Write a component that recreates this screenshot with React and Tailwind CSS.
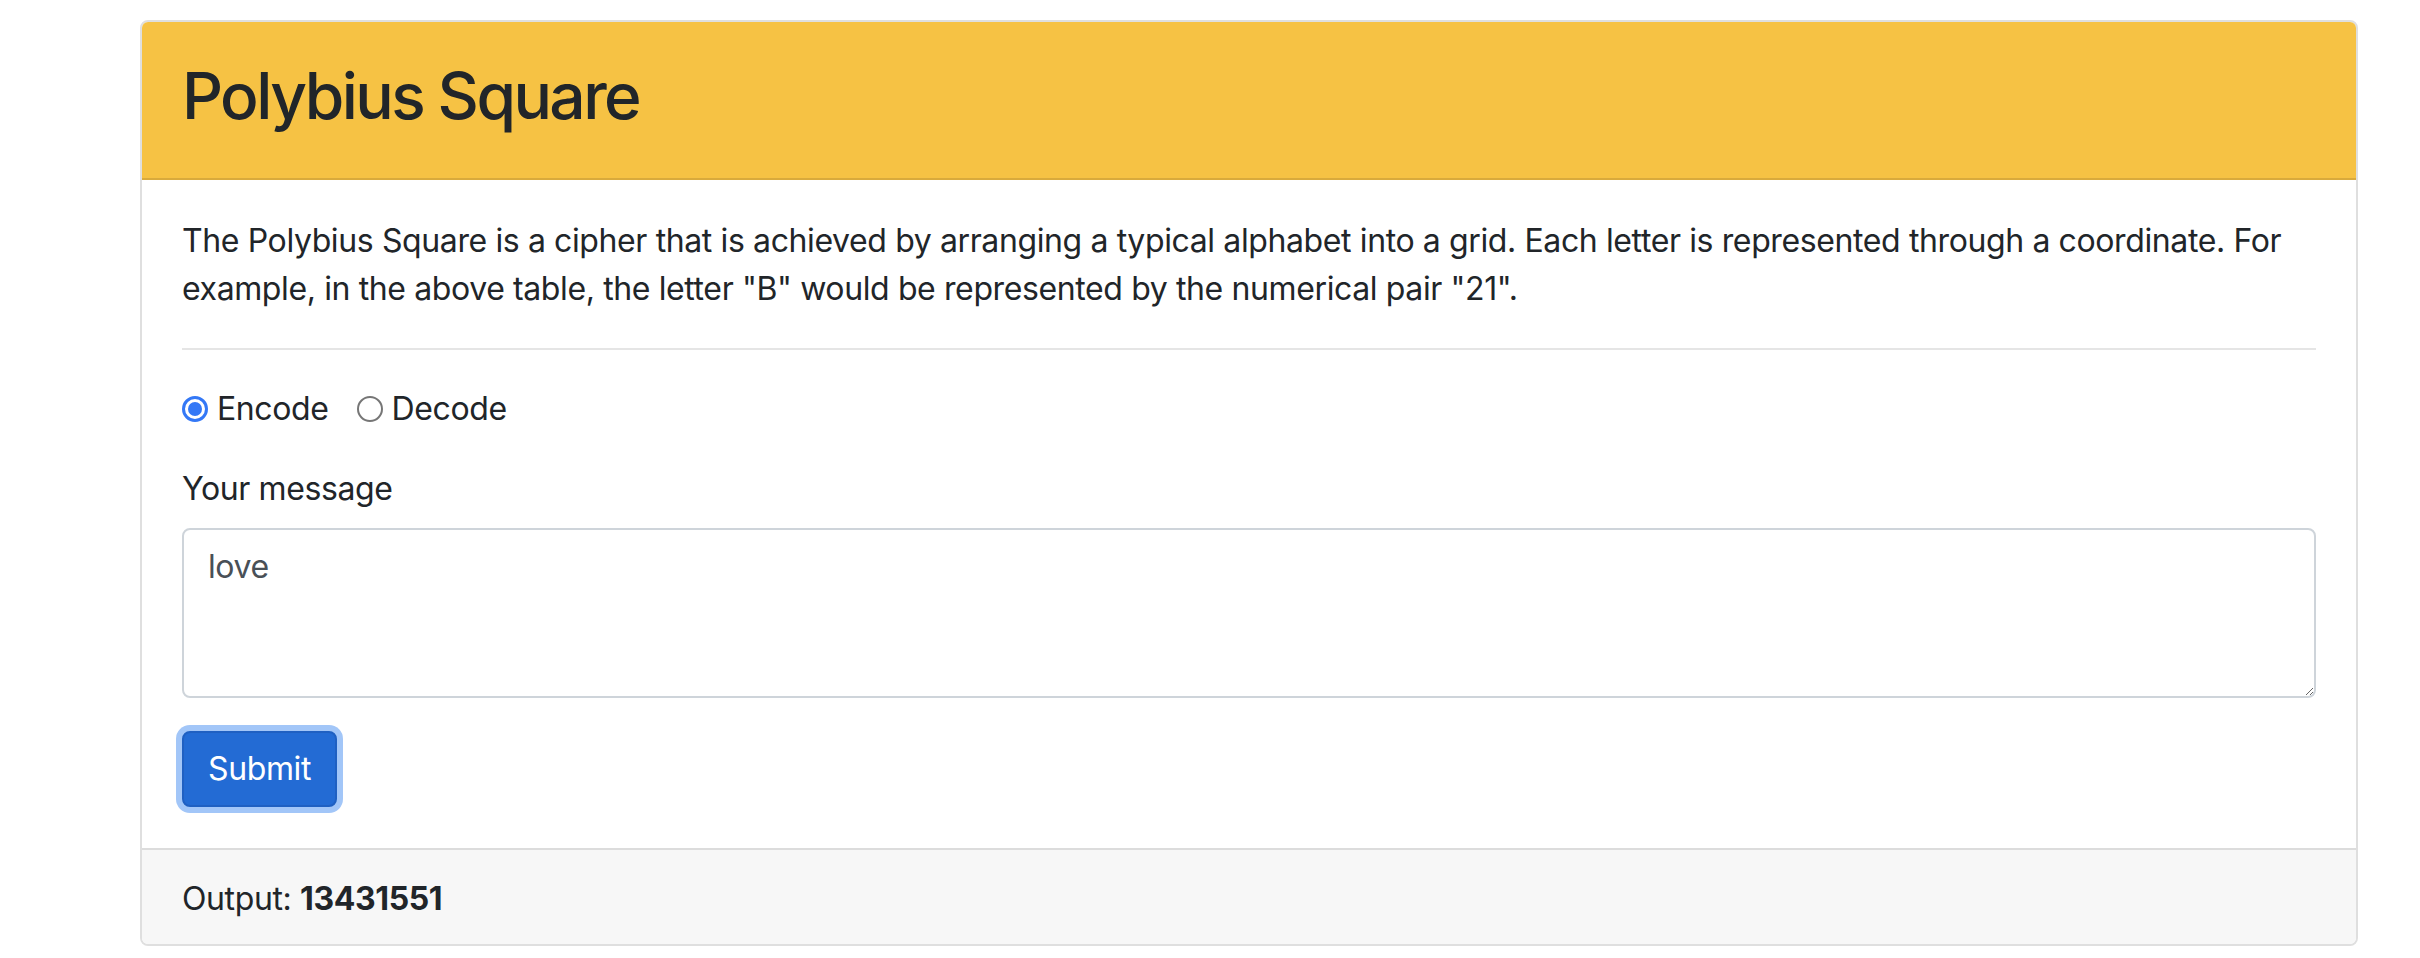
import { useState } from 'react';

const SQUARE = 'ABCDEFGHIKLMNOPQRSTUVWXYZ';

function encode(text) {
  return text
    .toUpperCase()
    .replace(/J/g, 'I')
    .split('')
    .filter((c) => SQUARE.includes(c))
    .map((c) => {
      const i = SQUARE.indexOf(c);
      return `${(i % 5) + 1}${Math.floor(i / 5) + 1}`;
    })
    .join('');
}

function Radio({ checked, label, onClick }) {
  return (
    <label onClick={onClick} className="flex items-center h-[48px] cursor-pointer">
      {checked ? (
        <span className="w-[26px] h-[26px] rounded-full border-[3px] border-[#3478f6] bg-white flex items-center justify-center">
          <span className="w-[14px] h-[14px] rounded-full bg-[#3478f6]" />
        </span>
      ) : (
        <span className="w-[26px] h-[26px] rounded-full border-2 border-[#767676] bg-white" />
      )}
      <span className="ml-[9px]">{label}</span>
    </label>
  );
}

export default function App() {
  const [mode, setMode] = useState('encode');
  const [message, setMessage] = useState('love');
  const [output] = useState(encode('love'));

  return (
    <div className="w-[2420px] h-[958px] bg-white pt-[20px] font-['Inter',sans-serif] text-[#212529] text-[32px] leading-[48px] tracking-[-0.012em]">
      <div className="ml-[140px] w-[2218px] border-2 border-[#dfdfdf] rounded-[8px] overflow-hidden">
        <div className="bg-[#f6c244] border-b-2 border-[#d9aa3c] px-[40px] pt-[35px] pb-[44px]">
          <h2 className="text-[64px] leading-[77px] font-medium tracking-[-0.04em]">Polybius Square</h2>
        </div>

        <div className="px-[40px] pt-[37px] pb-[41px]">
          <p>
            The Polybius Square is a cipher that is achieved by arranging a typical alphabet into a grid. Each letter is represented through a coordinate. For example, in the above table, the letter "B" would be represented by the numerical pair "21".
          </p>
          <hr className="mt-[35px] border-0 h-[2px] bg-[#e5e5e5]" />

          <div className="flex items-center gap-[28px] mt-[35px]">
            <Radio checked={mode === 'encode'} label="Encode" onClick={() => setMode('encode')} />
            <Radio checked={mode === 'decode'} label="Decode" onClick={() => setMode('decode')} />
          </div>

          <div className="mt-[32px] mb-[15px]">Your message</div>
          <textarea
            value={message}
            onChange={(e) => setMessage(e.target.value)}
            className="block w-full h-[170px] border-2 border-[#ced4da] rounded-[8px] px-[24px] pt-[13px] text-[#495057] outline-none"
          />

          <button className="mt-[33px] h-[76px] px-[24px] bg-[#236bd4] border-2 border-[#1f60c2] rounded-[8px] text-white shadow-[0_0_0_6px_#a2c6f8]">
            Submit
          </button>
        </div>

        <div className="bg-[#f7f7f7] border-t-2 border-[#dcdcdc] px-[40px] pt-[25px] pb-[21px]">
          Output: <span className="font-bold">{output}</span>
        </div>
      </div>
    </div>
  );
}
